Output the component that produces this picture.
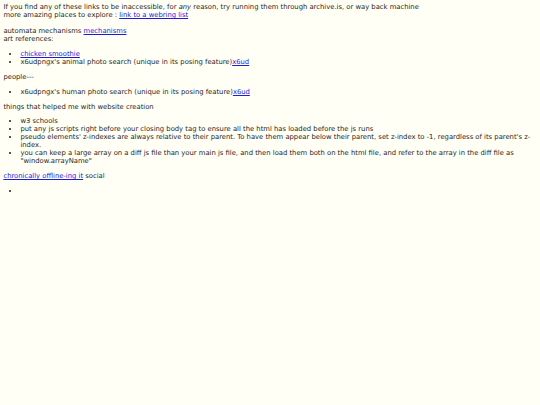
export default function App() {
  const link = "text-[#1c1cdc] underline";
  const ul = "my-[6.8px] list-disc pl-[17px]";
  return (
    <div
      className="min-h-[405px] w-[540px] bg-[#fffff5] p-[3.4px] text-[6.8px] leading-[8px] text-[#1e1e1e]"
      style={{ fontFamily: '"DejaVu Sans", Verdana, sans-serif' }}
    >
      <div>
        If you find any of these links to be inaccessible, for <i>any</i> reason, try running them through archive.is, or way back machine
      </div>
      <div>
        more amazing places to explore : <a className={link}>link to a webring list</a>
      </div>
      <div className="h-[8px]" />
      <div>
        automata mechanisms <a className={link}>mechanisms</a>
      </div>
      <div>art references:</div>
      <ul className={ul}>
        <li>
          <a className={link}>chicken smoothie</a>
        </li>
        <li>
          x6udpngx's animal photo search (unique in its posing feature)<a className={link}>x6ud</a>
        </li>
      </ul>
      <div>people---</div>
      <ul className={ul}>
        <li>
          x6udpngx's human photo search (unique in its posing feature)<a className={link}>x6ud</a>
        </li>
      </ul>
      <div>things that helped me with website creation</div>
      <ul className={ul}>
        <li>w3 schools</li>
        <li>put any js scripts right before your closing body tag to ensure all the html has loaded before the js runs</li>
        <li>
          pseudo elements' z-indexes are always relative to their parent. To have them appear below their parent, set z-index to -1, regardless of its parent's z-index.
        </li>
        <li>
          you can keep a large array on a diff js file than your main js file, and then load them both on the html file, and refer to the array in the diff file as "window.arrayName"
        </li>
      </ul>
      <div>
        <a className={link}>chronically offline-ing it</a> social
      </div>
      <ul className={ul}>
        <li>&nbsp;</li>
      </ul>
    </div>
  );
}
